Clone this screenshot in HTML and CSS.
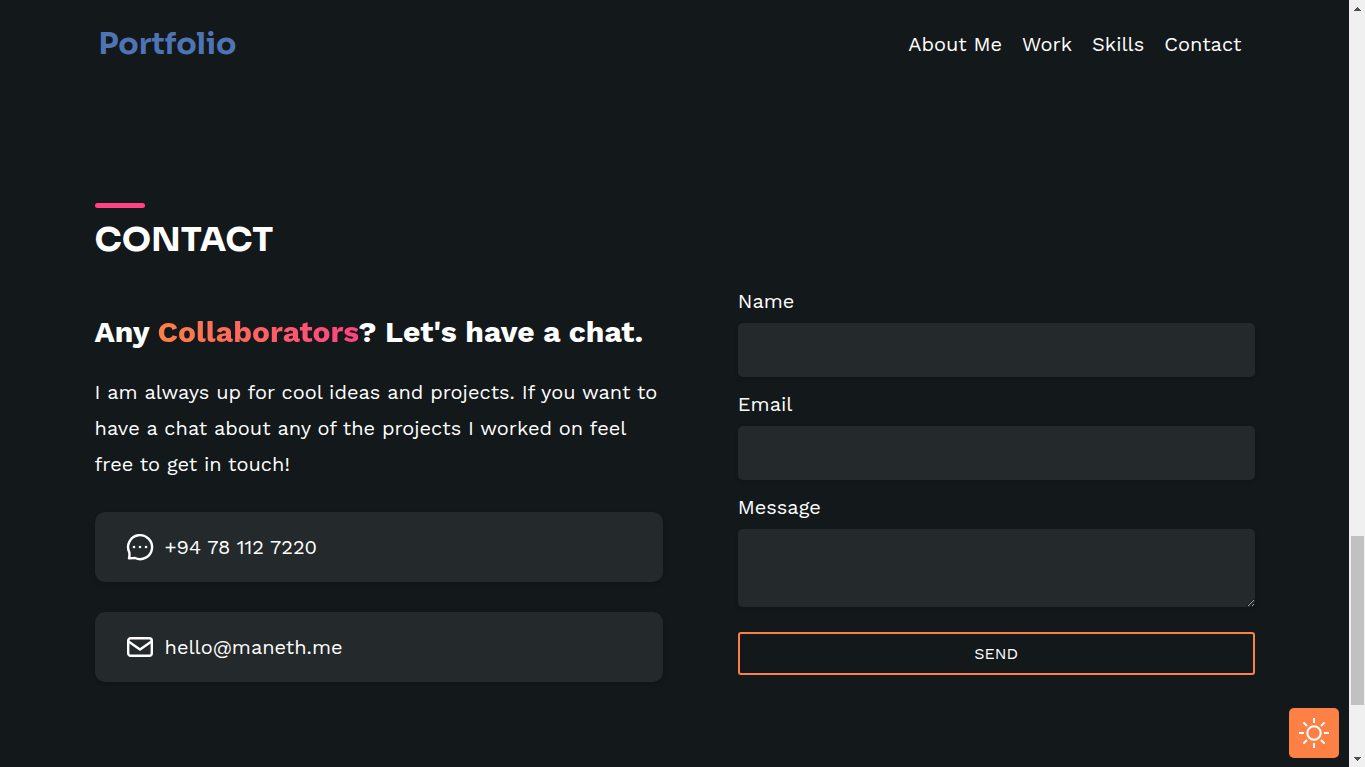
FILE: index.html
```html
<!DOCTYPE html>
<html lang="en">
<head>
<meta charset="utf-8">
<meta name="viewport" content="width=device-width, initial-scale=1">
<title>Portfolio</title>
<link rel="stylesheet" href="styles.css">
</head>
<body>
<div class="page">
  <header class="header">
    <a class="logo" href="#">Portfolio</a>
    <nav class="nav">
      <a href="#about">About Me</a>
      <a href="#work">Work</a>
      <a href="#skills">Skills</a>
      <a href="#contact">Contact</a>
    </nav>
  </header>
  <main class="contact" id="contact">
    <h2 class="title">CONTACT</h2>
    <div class="columns">
      <section class="intro">
        <h3 class="lead">Any <span class="accent">Collaborators</span>? Let's have a chat.</h3>
        <p class="text">I am always up for cool ideas and projects. If you want to have a chat about any of the projects I worked on feel free to get in touch!</p>
        <a class="card" href="tel:+94781127220">
          <svg class="icon" viewBox="0 0 28 28" aria-hidden="true"><path d="M3.300 19.400A12 12 0 1 1 9 25L3 25.400Q3.800 22.400 3.300 19.400Z"/><g class="dots"><circle cx="8" cy="14" r="1.300"/><circle cx="14" cy="14" r="1.300"/><circle cx="20" cy="14" r="1.300"/></g></svg>
          <span>+94 78 112 7220</span>
        </a>
        <a class="card" href="mailto:hello@maneth.me">
          <svg class="icon" viewBox="0 0 28 28" aria-hidden="true"><rect x="2.200" y="5.200" width="23.600" height="17.600" rx="2.500"/><path d="M2.500 8.500L14 16.500L25.500 8.500"/></svg>
          <span>hello@maneth.me</span>
        </a>
      </section>
      <form class="form">
        <label for="name">Name</label>
        <input id="name" type="text">
        <label for="email">Email</label>
        <input id="email" type="email">
        <label for="message">Message</label>
        <textarea id="message"></textarea>
        <button class="send" type="button">SEND</button>
      </form>
    </div>
  </main>
  <button class="theme" type="button" aria-label="Toggle theme">
    <svg viewBox="0 0 30 30" aria-hidden="true"><circle cx="15" cy="15" r="6.700"/><path d="M15 0V5M15 25V30M0 15H5M25 15H30M4.400 4.400L8 8M22 22L25.600 25.600M25.600 4.400L22 8M8 22L4.400 25.600"/></svg>
  </button>
</div>
<div class="scrollbar" aria-hidden="true">
  <svg class="arrow" viewBox="0 0 7 4"><path d="M3 0h1v1h1v1h1v1h1v1H0V3h1V2h1V1h1z"/></svg>
  <div class="track"><div class="thumb"></div></div>
  <svg class="arrow" viewBox="0 0 7 4"><path d="M0 0h7v1H6v1H5v1H4v1H3V3H2V2H1V1H0z"/></svg>
</div>
</body>
</html>
```
FILE: styles.css
```css
* {
  box-sizing: border-box;
}

body {
  margin: 0;
  display: flex;
  min-height: 100vh;
  background: #13181b;
  color: #fff;
  font: 20px/24px "Work Sans", Inter, sans-serif;
}

a {
  color: inherit;
  text-decoration: none;
}

.page {
  flex: 1;
  min-width: 0;
  position: relative;
}

.header {
  display: flex;
  align-items: center;
  justify-content: space-between;
  max-width: 1152px;
  height: 88px;
  margin: 0 auto;
  padding: 0 9px 0 0;
}

.logo {
  color: #4f74b3;
  font-family: Sora, "Work Sans", Inter, sans-serif;
  font-size: 30px;
  font-weight: 700;
  line-height: 40px;
}

.nav {
  display: flex;
  gap: 20px;
}

.contact {
  max-width: 1160px;
  margin: 0 auto;
  padding: 115px 0 84px;
}

.title {
  margin: 0;
  font-family: Sora, Inter, "Work Sans", sans-serif;
  font-size: 34px;
  font-weight: 700;
  line-height: 48px;
}

.title::before {
  content: "";
  display: block;
  width: 50px;
  height: 5px;
  margin-bottom: 8px;
  border-radius: 3px;
  background: #ff4382;
}

.columns {
  display: grid;
  grid-template-columns: 1.1fr 1fr;
  gap: 75px;
  margin-top: 25px;
}

.lead {
  margin: 25px 0 24px;
  font-size: 30px;
  font-weight: 700;
  line-height: 36px;
}

.accent {
  background: linear-gradient(90deg, #fd8145, #ff4382);
  background-clip: text;
  -webkit-background-clip: text;
  color: transparent;
}

.text {
  margin: 0 0 30px;
  line-height: 36px;
}

.card {
  display: flex;
  align-items: center;
  gap: 11px;
  height: 70px;
  padding: 0 31px;
  border-radius: 10px;
  background: #24292b;
  box-shadow: 0 2px 4px rgba(0, 0, 0, 0.15);
}

.card + .card {
  margin-top: 30px;
}

.icon {
  width: 28px;
  height: 28px;
  fill: none;
  stroke: #fff;
  stroke-width: 2.400;
  stroke-linejoin: round;
}

.dots {
  fill: #fff;
  stroke: none;
}

.form {
  display: flex;
  flex-direction: column;
}

.form label {
  margin-bottom: 10px;
}

.form input,
.form textarea {
  width: 100%;
  height: 54px;
  margin: 0 0 15px;
  padding: 15px;
  border: 0;
  border-radius: 5px;
  background: #24292b;
  color: #fff;
  font: inherit;
  box-shadow: 0 2px 4px rgba(0, 0, 0, 0.15);
}

.form textarea {
  height: 78px;
  margin-bottom: 25px;
  resize: vertical;
}

.send {
  height: 43px;
  border: 2px solid #fd8145;
  border-radius: 3px;
  background: transparent;
  color: #fff;
  font: 16px/20px "Work Sans", Inter, sans-serif;
}

.theme {
  position: fixed;
  right: 26px;
  bottom: 9px;
  display: grid;
  place-items: center;
  width: 50px;
  height: 50px;
  padding: 0;
  border: 0;
  border-radius: 5px;
  background: #fd8145;
}

.theme svg {
  width: 30px;
  height: 30px;
  fill: none;
  stroke: #fff;
  stroke-width: 2;
}

.scrollbar {
  display: flex;
  flex-direction: column;
  align-items: center;
  flex: 0 0 16px;
  padding: 7px 0 6px;
  background: #f0f0f0;
}

.arrow {
  width: 7px;
  height: 4px;
  fill: #505050;
}

.track {
  flex: 1;
  display: flex;
  flex-direction: column;
  justify-content: flex-end;
  padding-bottom: 52px;
}

.thumb {
  width: 13px;
  height: 169px;
  background: #c1c1c1;
}
```
